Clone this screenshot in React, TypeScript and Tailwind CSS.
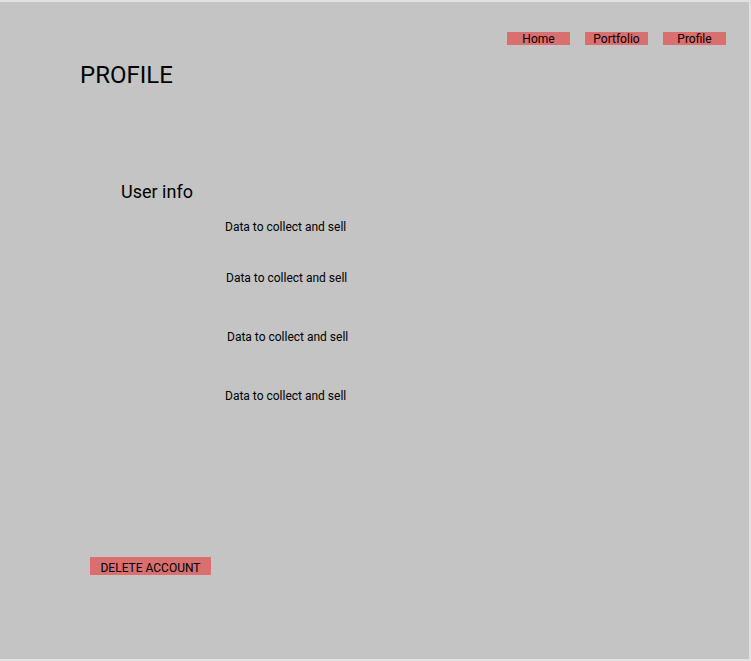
const NavButton = ({ label }: { label: string }) => (
  <button className="w-[63px] h-[13px] pt-px bg-[#d96f6f] text-[12px] leading-[13px] text-black">
    {label}
  </button>
);

const DataRow = ({ offset }: { offset: string }) => (
  <p className={`text-[12px] leading-[14px] text-black ${offset}`}>Data to collect and sell</p>
);

export default function App() {
  return (
    <div className="w-[751px] h-[661px] bg-[#e2e2e2] pt-[2px] pb-[2px] pr-[2px] font-['Roboto',sans-serif]">
      <div className="h-full bg-[#c4c4c4] flex flex-col">
        <nav className="flex justify-end gap-[15px] pt-[30px] pr-[23px]">
          <NavButton label="Home" />
          <NavButton label="Portfolio" />
          <NavButton label="Profile" />
        </nav>
        <h1 className="ml-[80px] mt-[16px] text-[24px] leading-[28px] text-black">PROFILE</h1>
        <h2 className="ml-[121px] mt-[92px] text-[18px] leading-[22px] text-black">User info</h2>
        <div className="flex flex-col mt-[17px]">
          <DataRow offset="ml-[225px]" />
          <DataRow offset="ml-[226px] mt-[37px]" />
          <DataRow offset="ml-[227px] mt-[45px]" />
          <DataRow offset="ml-[225px] mt-[45px]" />
        </div>
        <div className="flex ml-[90px] mt-[154px]">
          <button className="flex items-start justify-center w-[121px] h-[18px] pt-[4px] bg-[#d96f6f] text-[12px] leading-[14px] text-black">
            DELETE ACCOUNT
          </button>
        </div>
      </div>
    </div>
  );
}
